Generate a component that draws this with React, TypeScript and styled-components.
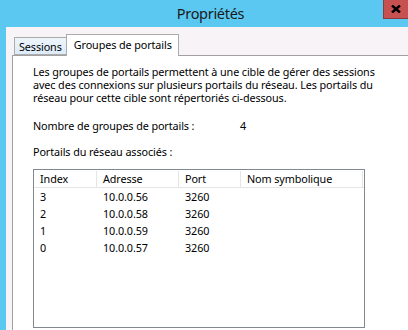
import styled, { createGlobalStyle } from "styled-components";

const GlobalStyle = createGlobalStyle`
  html, body {
    margin: 0;
    padding: 0;
    background: #5ac8f0;
  }
  body {
    font-family: "Noto Sans", "DejaVu Sans", sans-serif;
    font-size: 10.8px;
    letter-spacing: -0.1px;
    color: #000;
  }
`;

const Window = styled.div`
  width: 408px;
  height: 330px;
  overflow: hidden;
  display: flex;
  flex-direction: column;
  background: #5ac8f0;
`;

const TitleBar = styled.div`
  height: 27px;
  flex-shrink: 0;
  position: relative;
  display: flex;
  align-items: center;
  justify-content: center;
`;

const Title = styled.span`
  font-size: 14.5px;
  letter-spacing: -0.3px;
  color: #1b1b1b;
  margin-left: 13px;
  margin-top: -1px;
`;

const CloseButton = styled.div`
  position: absolute;
  top: 0;
  right: 0;
  width: 24px;
  height: 18px;
  background: #c75050;
  border-left: 1px solid #8c3a3a;
  border-bottom: 1px solid #8c3a3a;
  display: flex;
  align-items: center;
  justify-content: center;
`;

const Body = styled.div`
  flex: 1;
  margin-left: 6px;
  background: #f7f3f7;
  padding-top: 7px;
  display: flex;
  flex-direction: column;
  min-height: 0;
`;

const TabStrip = styled.div`
  display: flex;
  align-items: flex-end;
  padding-left: 8px;
  height: 21px;
  flex-shrink: 0;
  position: relative;
  z-index: 1;
`;

const Tab = styled.div<{ $active?: boolean }>`
  box-sizing: border-box;
  height: ${(p) => (p.$active ? "22px" : "18px")};
  margin-bottom: ${(p) => (p.$active ? "-1px" : "0")};
  padding: ${(p) => (p.$active ? "0 6px 3px 7px" : "1px 4px 0 4px")};
  display: flex;
  align-items: center;
  background: ${(p) => (p.$active ? "#ffffff" : "linear-gradient(#eef5fb, #dcebf8)")};
  border: 1px solid #acacac;
  border-bottom: ${(p) => (p.$active ? "none" : "1px solid #acacac")};
  ${(p) => (p.$active ? "" : "border-right: none;")}
  white-space: nowrap;
`;

const Panel = styled.div`
  flex: 1;
  margin-left: 6px;
  width: 420px;
  background: #ffffff;
  border: 1px solid #a0a0a0;
  border-bottom: none;
  padding: 9px 0 0 20px;
  display: flex;
  flex-direction: column;
`;

const Paragraph = styled.p`
  margin: 0;
  line-height: 13px;
  white-space: nowrap;
`;

const InfoRow = styled.div`
  display: grid;
  grid-template-columns: 207px auto;
  line-height: 13px;
  margin-top: 15px;
`;

const Label = styled.div`
  line-height: 13px;
  margin-top: 13px;
`;

const ListView = styled.div`
  margin-top: 11px;
  flex-shrink: 0;
  width: 332px;
  height: 159px;
  box-sizing: border-box;
  border: 1px solid #828790;
  padding: 1px 0 0 0;
  display: flex;
  flex-direction: column;
`;

const HeaderRow = styled.div`
  display: grid;
  grid-template-columns: 63px 82px 62px 122px;
  height: 17px;
  box-sizing: border-box;
  border-bottom: 1px solid #e5e5e5;
`;

const HeaderCell = styled.div`
  padding-left: 6px;
  border-right: 1px solid #e5e5e5;
  line-height: 16px;
  white-space: nowrap;
`;

const Row = styled.div`
  display: grid;
  grid-template-columns: 63px 82px 62px 122px;
  height: 17px;
  &:first-of-type {
    margin-top: 1px;
  }
`;

const Cell = styled.div`
  padding-left: 6px;
  line-height: 17px;
  white-space: nowrap;
`;

const portals = [
  { index: "3", address: "10.0.0.56", port: "3260" },
  { index: "2", address: "10.0.0.58", port: "3260" },
  { index: "1", address: "10.0.0.59", port: "3260" },
  { index: "0", address: "10.0.0.57", port: "3260" },
];

export default function App() {
  return (
    <>
      <GlobalStyle />
      <Window>
        <TitleBar>
          <Title>Propriétés</Title>
          <CloseButton>
            <svg width="10" height="8" viewBox="0 0 10 8">
              <path d="M1 0.5 L9 7.5 M9 0.5 L1 7.5" stroke="#000" strokeWidth="2.4" />
            </svg>
          </CloseButton>
        </TitleBar>
        <Body>
          <TabStrip>
            <Tab>Sessions</Tab>
            <Tab $active>Groupes de portails</Tab>
          </TabStrip>
          <Panel>
            <Paragraph>
              Les groupes de portails permettent à une cible de gérer des sessions
              <br />
              avec des connexions sur plusieurs portails du réseau. Les portails du
              <br />
              réseau pour cette cible sont répertoriés ci-dessous.
            </Paragraph>
            <InfoRow>
              <span>Nombre de groupes de portails :</span>
              <span>4</span>
            </InfoRow>
            <Label>Portails du réseau associés :</Label>
            <ListView>
              <HeaderRow>
                <HeaderCell>Index</HeaderCell>
                <HeaderCell>Adresse</HeaderCell>
                <HeaderCell>Port</HeaderCell>
                <HeaderCell>Nom symbolique</HeaderCell>
              </HeaderRow>
              {portals.map((p) => (
                <Row key={p.index}>
                  <Cell>{p.index}</Cell>
                  <Cell>{p.address}</Cell>
                  <Cell>{p.port}</Cell>
                  <Cell />
                </Row>
              ))}
            </ListView>
          </Panel>
        </Body>
      </Window>
    </>
  );
}
